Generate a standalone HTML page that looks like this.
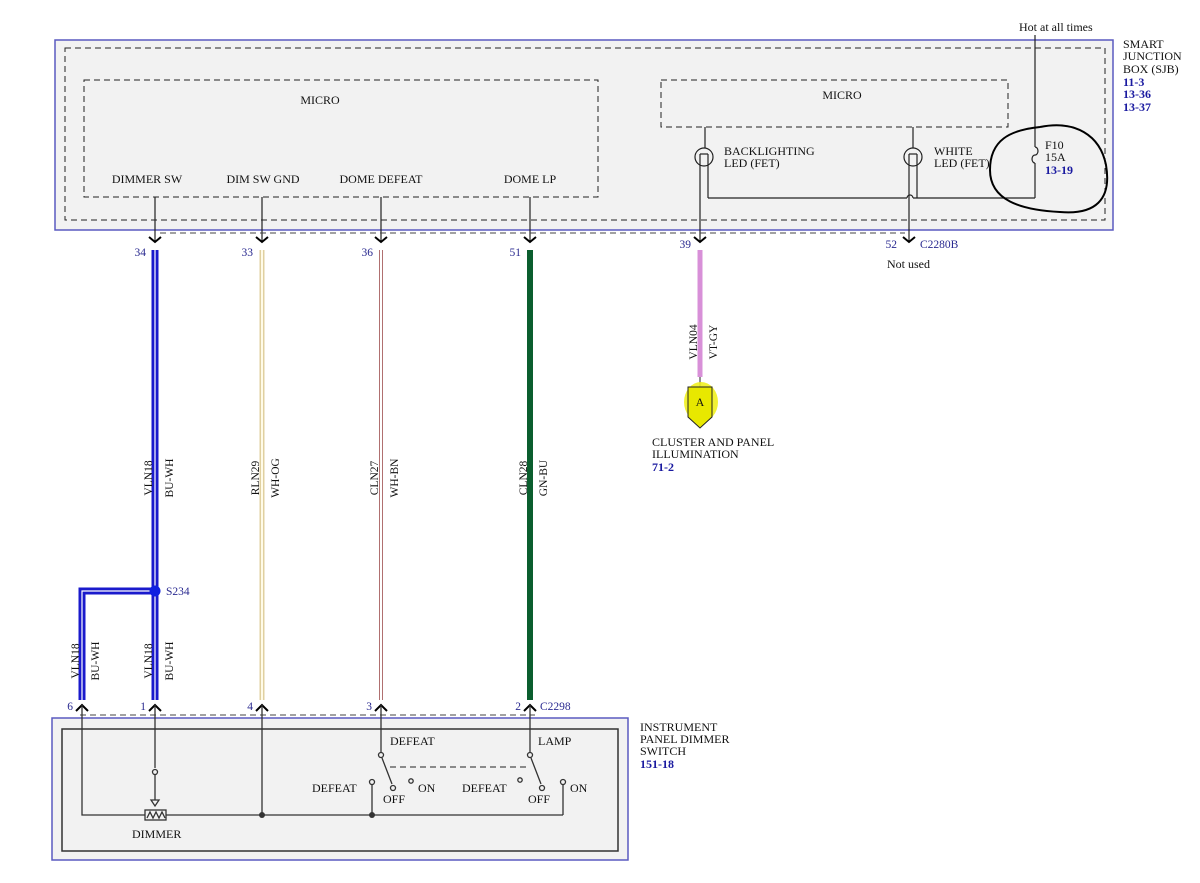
<!DOCTYPE html>
<html><head><meta charset="utf-8"><style>
html,body{margin:0;padding:0;background:#fff;}
svg{display:block;font-family:"Liberation Serif",serif;}
.t{font-size:12px;fill:#111;}
.b{font-size:12px;fill:#1a1aa0;font-weight:bold;}
.n{font-size:11.5px;fill:#2a2a90;}
.r{font-size:11.5px;fill:#111;}
</style></head><body>
<svg width="1200" height="883" viewBox="0 0 1200 883" xmlns="http://www.w3.org/2000/svg">
<defs>
<path id="arD" d="M-6,-5 L0,0 L6,-5" fill="none" stroke="#000" stroke-width="2"/>
</defs>
<!-- SJB -->
<rect x="55" y="40" width="1058" height="190" fill="#f2f2f2" stroke="#5a5ac0" stroke-width="1.5"/>
<rect x="65" y="48" width="1040" height="172" fill="none" stroke="#222" stroke-dasharray="6,4"/>
<rect x="84" y="80" width="514" height="117" fill="none" stroke="#222" stroke-dasharray="6,4"/>
<text x="320" y="104" class="t" text-anchor="middle">MICRO</text>
<text x="147" y="183" class="t" text-anchor="middle">DIMMER SW</text>
<text x="263" y="183" class="t" text-anchor="middle">DIM SW GND</text>
<text x="381" y="183" class="t" text-anchor="middle">DOME DEFEAT</text>
<text x="530" y="183" class="t" text-anchor="middle">DOME LP</text>
<rect x="661" y="80" width="347" height="47" fill="none" stroke="#222" stroke-dasharray="6,4"/>
<text x="842" y="99" class="t" text-anchor="middle">MICRO</text>
<g stroke="#222" stroke-width="1.2" fill="none">
<line x1="155" y1="197" x2="155" y2="242"/>
<line x1="262" y1="197" x2="262" y2="242"/>
<line x1="381" y1="197" x2="381" y2="242"/>
<line x1="530" y1="197" x2="530" y2="242"/>
<line x1="705" y1="127" x2="705" y2="148"/>
<circle cx="704" cy="157" r="9"/>
<line x1="700" y1="154" x2="700" y2="242"/>
<line x1="700" y1="154" x2="708" y2="154"/>
<line x1="708" y1="154" x2="708" y2="198"/>
<line x1="708" y1="198" x2="907" y2="198"/>
<path d="M907,198 a3,3 0 0 1 6,0"/>
<line x1="913" y1="198" x2="1035" y2="198"/>
<line x1="913" y1="127" x2="913" y2="148"/>
<circle cx="913" cy="157" r="9"/>
<line x1="909" y1="154" x2="917" y2="154"/>
<line x1="909" y1="154" x2="909" y2="242"/>
<line x1="917" y1="154" x2="917" y2="198"/>
<line x1="1035" y1="35" x2="1035" y2="147"/>
<path d="M1035,147 a3,4 0 0 1 0,8 a3,4 0 0 0 0,8"/>
<line x1="1035" y1="163" x2="1035" y2="198"/>
</g>
<line x1="160" y1="233" x2="905" y2="233" stroke="#444" stroke-dasharray="6,4"/>
<text x="724" y="155" class="t">BACKLIGHTING</text>
<text x="724" y="167" class="t">LED (FET)</text>
<text x="934" y="155" class="t">WHITE</text>
<text x="934" y="167" class="t">LED (FET)</text>
<text x="1045" y="149" class="t">F10</text>
<text x="1045" y="161" class="t">15A</text>
<text x="1045" y="174" class="b">13-19</text>
<text x="1019" y="31" class="t">Hot at all times</text>
<text x="1123" y="48" class="t">SMART</text>
<text x="1123" y="60" class="t">JUNCTION</text>
<text x="1123" y="73" class="t">BOX (SJB)</text>
<text x="1123" y="86" class="b">11-3</text>
<text x="1123" y="98" class="b">13-36</text>
<text x="1123" y="111" class="b">13-37</text>
<path d="M1040,127 C1075,120 1100,135 1106,165 C1112,200 1095,215 1060,212 C1020,210 990,200 990,170 C990,140 1010,130 1040,127" fill="none" stroke="#000" stroke-width="2"/>
<!-- top arrows -->
<use href="#arD" x="155" y="242"/><use href="#arD" x="262" y="242"/><use href="#arD" x="381" y="242"/><use href="#arD" x="530" y="242"/><use href="#arD" x="700" y="242"/><use href="#arD" x="909" y="242"/>
<text x="146" y="256" class="n" text-anchor="end">34</text>
<text x="253" y="256" class="n" text-anchor="end">33</text>
<text x="373" y="256" class="n" text-anchor="end">36</text>
<text x="521" y="256" class="n" text-anchor="end">51</text>
<text x="691" y="248" class="n" text-anchor="end">39</text>
<text x="897" y="248" class="n" text-anchor="end">52</text>
<text x="920" y="248" class="n">C2280B</text>
<text x="887" y="268" class="t">Not used</text>
<!-- wires -->
<line x1="155" y1="250" x2="155" y2="700" stroke="#1a1acc" stroke-width="7"/>
<line x1="155" y1="250" x2="155" y2="700" stroke="#fff" stroke-width="1.2"/>
<path d="M155,591 H82 V700" fill="none" stroke="#1a1acc" stroke-width="7"/>
<path d="M155,591 H82 V700" fill="none" stroke="#fff" stroke-width="1.2"/>
<circle cx="155" cy="591" r="5.5" fill="#1020e0"/>
<text x="166" y="595" class="n">S234</text>
<line x1="262" y1="250" x2="262" y2="700" stroke="#e0d0a0" stroke-width="5"/>
<line x1="262" y1="250" x2="262" y2="700" stroke="#fffbe8" stroke-width="2"/>
<line x1="381" y1="250" x2="381" y2="700" stroke="#b07070" stroke-width="4"/>
<line x1="381" y1="250" x2="381" y2="700" stroke="#fff" stroke-width="2"/>
<line x1="530" y1="250" x2="530" y2="700" stroke="#0b5e2e" stroke-width="6"/>
<line x1="700" y1="250" x2="700" y2="377" stroke="#d890d8" stroke-width="5"/>
<line x1="700" y1="377" x2="700" y2="387" stroke="#222"/>
<g class="r">
<text transform="translate(152,478) rotate(-90)" text-anchor="middle" class="r">VLN18</text>
<text transform="translate(173,478) rotate(-90)" text-anchor="middle" class="r">BU-WH</text>
<text transform="translate(79,661) rotate(-90)" text-anchor="middle" class="r">VLN18</text>
<text transform="translate(99,661) rotate(-90)" text-anchor="middle" class="r">BU-WH</text>
<text transform="translate(152,661) rotate(-90)" text-anchor="middle" class="r">VLN18</text>
<text transform="translate(173,661) rotate(-90)" text-anchor="middle" class="r">BU-WH</text>
<text transform="translate(259,478) rotate(-90)" text-anchor="middle" class="r">RLN29</text>
<text transform="translate(279,478) rotate(-90)" text-anchor="middle" class="r">WH-OG</text>
<text transform="translate(378,478) rotate(-90)" text-anchor="middle" class="r">CLN27</text>
<text transform="translate(398,478) rotate(-90)" text-anchor="middle" class="r">WH-BN</text>
<text transform="translate(527,478) rotate(-90)" text-anchor="middle" class="r">CLN28</text>
<text transform="translate(547,478) rotate(-90)" text-anchor="middle" class="r">GN-BU</text>
<text transform="translate(697,342) rotate(-90)" text-anchor="middle" class="r">VLN04</text>
<text transform="translate(717,342) rotate(-90)" text-anchor="middle" class="r">VT-GY</text>
</g>
<!-- A connector -->
<ellipse cx="701" cy="402" rx="17" ry="20" fill="#f0f020" opacity="0.9"/>
<path d="M688,387 H712 V417 L700,428 L688,417 Z" fill="#e8e800" stroke="#222"/>
<text x="700" y="406" class="t" text-anchor="middle" font-size="11">A</text>
<text x="652" y="446" class="t">CLUSTER AND PANEL</text>
<text x="652" y="458" class="t">ILLUMINATION</text>
<text x="652" y="471" class="b">71-2</text>
<!-- bottom -->
<line x1="80" y1="715" x2="535" y2="715" stroke="#444" stroke-dasharray="6,4"/>
<rect x="52" y="718" width="576" height="142" fill="#f2f2f2" stroke="#5a5ac0" stroke-width="1.5"/>
<rect x="62" y="729" width="556" height="122" fill="none" stroke="#333" stroke-width="1.5"/>
<g stroke="#000" stroke-width="2" fill="none">
<path d="M76,711 L82,705 L88,711"/><path d="M149,711 L155,705 L161,711"/><path d="M256,711 L262,705 L268,711"/><path d="M375,711 L381,705 L387,711"/><path d="M524,711 L530,705 L536,711"/>
</g>
<text x="73" y="710" class="n" text-anchor="end">6</text>
<text x="146" y="710" class="n" text-anchor="end">1</text>
<text x="253" y="710" class="n" text-anchor="end">4</text>
<text x="372" y="710" class="n" text-anchor="end">3</text>
<text x="521" y="710" class="n" text-anchor="end">2</text>
<text x="540" y="710" class="n">C2298</text>
<g stroke="#333" stroke-width="1.3" fill="none">
<path d="M82,705 V815 H145"/>
<line x1="155" y1="705" x2="155" y2="768"/>
<circle cx="155" cy="772" r="2.5"/>
<line x1="155" y1="775" x2="155" y2="800"/>
<path d="M151,800 L159,800 L155,806 Z"/>
<rect x="145" y="810" width="21" height="10"/>
<path d="M147,818 L150,812 L153,818 L156,812 L159,818 L162,812 L165,818"/>
<line x1="166" y1="815" x2="563" y2="815"/>
<line x1="262" y1="705" x2="262" y2="815"/>
<line x1="381" y1="705" x2="381" y2="752"/>
<circle cx="381" cy="755" r="2.5"/>
<line x1="382" y1="758" x2="392" y2="784"/>
<circle cx="393" cy="788" r="2.5"/>
<circle cx="372" cy="782" r="2.5"/>
<line x1="372" y1="785" x2="372" y2="815"/>
<circle cx="411" cy="781" r="2.2"/>
<line x1="530" y1="705" x2="530" y2="752"/>
<circle cx="530" cy="755" r="2.5"/>
<line x1="531" y1="758" x2="541" y2="784"/>
<circle cx="542" cy="788" r="2.5"/>
<circle cx="520" cy="780" r="2.2"/>
<circle cx="563" cy="782" r="2.5"/>
<line x1="563" y1="785" x2="563" y2="815"/>
</g>
<line x1="390" y1="767" x2="528" y2="767" stroke="#222" stroke-dasharray="6,4"/>
<circle cx="262" cy="815" r="3" fill="#333"/>
<circle cx="372" cy="815" r="3" fill="#333"/>
<text x="390" y="745" class="t">DEFEAT</text>
<text x="538" y="745" class="t">LAMP</text>
<text x="312" y="792" class="t">DEFEAT</text>
<text x="383" y="803" class="t">OFF</text>
<text x="418" y="792" class="t">ON</text>
<text x="462" y="792" class="t">DEFEAT</text>
<text x="528" y="803" class="t">OFF</text>
<text x="570" y="792" class="t">ON</text>
<text x="132" y="838" class="t">DIMMER</text>
<text x="640" y="731" class="t">INSTRUMENT</text>
<text x="640" y="743" class="t">PANEL DIMMER</text>
<text x="640" y="755" class="t">SWITCH</text>
<text x="640" y="768" class="b">151-18</text>
</svg>
</body></html>
